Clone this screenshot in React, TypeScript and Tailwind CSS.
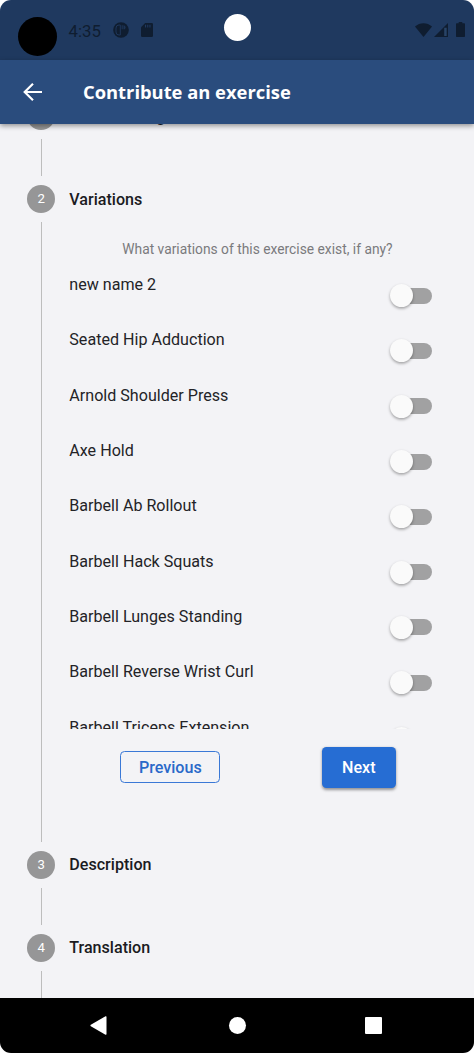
import React from 'react';

const exercises = [
  'new name 2',
  'Seated Hip Adduction',
  'Arnold Shoulder Press',
  'Axe Hold',
  'Barbell Ab Rollout',
  'Barbell Hack Squats',
  'Barbell Lunges Standing',
  'Barbell Reverse Wrist Curl',
  'Barbell Triceps Extension',
];

const StatusBar = () => (
  <div className="relative flex h-[59.5px] shrink-0 items-center bg-[#1f395f] pl-[17.5px] pr-[9px] text-[#0f1d30]">
    <div className="mt-[13px] h-[39px] w-[39px] rounded-full bg-black" />
    <span className="ml-[12px] mt-[2px] w-[34px] whitespace-nowrap text-[16.8px] leading-5">4:35</span>
    <svg className="ml-[10.5px] h-4 w-4" viewBox="0 0 16 16">
      <circle cx="8" cy="8" r="7.8" fill="currentColor" />
      <path d="M7.3 3v10H6a3 3 0 0 1-3-3V6a3 3 0 0 1 3-3z" fill="none" stroke="#1f395f" strokeWidth="0.9" />
      <path d="M8.6 3.2h1.2v4H8.600zM10.500 3.300a2.200 2.200 0 0 1 1.300 3.900h-1.300z" fill="#1f395f" opacity="0.8" />
    </svg>
    <svg className="ml-[11.500px] h-[14px] w-[12px]" viewBox="0 0 12 14">
      <path d="M4.200 0h6.600Q12 0 12 1.200v11.600q0 1.200-1.200 1.200H1.200Q0 14 0 12.800V4.200z" fill="currentColor" />
      <path d="M4 1.800h1.100v2.600H4zM6.200 1.800h1.100v2.600H6.200zM8.400 1.800h1.100v2.600H8.400z" fill="#1f395f" />
    </svg>
    <div className="absolute left-[223.5px] top-[13.5px] h-[27.5px] w-[27.5px] rounded-full bg-white" />
    <div className="ml-auto flex items-center">
      <svg className="h-[14px] w-[17px]" viewBox="0 0 18 14" preserveAspectRatio="none">
        <path d="M0 3.5C5 -1 13 -1 18 3.5L9 14z" fill="currentColor" />
      </svg>
      <svg className="ml-[2px] h-[14px] w-[14px]" viewBox="0 0 14 14">
        <path d="M14 0v14H0z" fill="currentColor" />
        <path d="M10.2 4.800h2.500v8.200h-2.500z" fill="#284467" />
      </svg>
      <svg className="ml-[8px] h-[15px] w-[9px]" viewBox="0 0 9 15">
        <path d="M2.7 0h3.6v1.3H8c.6 0 1 .4 1 1V14c0 .6-.4 1-1 1H1c-.6 0-1-.4-1-1V2.300c0-.6.4-1 1-1h1.700z" fill="currentColor" />
      </svg>
    </div>
  </div>
);

const AppBar = () => (
  <div className="relative z-10 flex h-[64.5px] shrink-0 items-center bg-[#2a4c7d] pl-[23px] shadow-[0_2px_5px_rgba(0,0,0,0.4)]">
    <svg className="h-[18px] w-[19px] text-white" viewBox="0 0 19 18" fill="none" stroke="currentColor" strokeWidth="2.2">
      <path d="M19 9H2M10 .8L1.700 9l8.300 8.200" />
    </svg>
    <h1 className="ml-[41px] font-['Open_Sans',sans-serif] text-[18.35px] font-bold leading-6 text-white">
      Contribute an exercise
    </h1>
  </div>
);

const Toggle = () => (
  <div className="relative mr-[42px] h-[16px] w-[38px] rounded-full bg-[#a1a1a2]">
    <div className="absolute -left-[4px] -top-[3.5px] h-[23px] w-[23px] rounded-full bg-[#fafafa] shadow-[0_1.5px_3px_rgba(0,0,0,0.35)]" />
  </div>
);

const Step = ({
  number,
  title,
  children,
}: {
  number: number;
  title: string;
  children?: React.ReactNode;
}) => (
  <div className="flex">
    <div className="flex w-[28px] shrink-0 flex-col items-center">
      <div className="flex h-[28px] w-[28px] items-center justify-center rounded-full bg-[#969697] text-[13.2px] text-white">
        {number}
      </div>
      <div className="my-[9px] min-h-[37px] w-px flex-1 bg-[#bdbdbd]" />
    </div>
    <div className="flex-1 pl-[14px]">
      <h2 className="flex h-[28px] items-center pt-[2px] text-[16.1px] font-medium text-[#1b1b1f]">{title}</h2>
      {children}
    </div>
  </div>
);

const Variations = () => (
  <div className="h-[637.5px] pt-[26.500px]">
    <p className="pl-[53px] text-[13.8px] leading-[18px] text-[#7a7a7d]">
      What variations of this exercise exist, if any?
    </p>
    <div className="mt-[10.500px] h-[460.500px] overflow-hidden">
      {exercises.map((name) => (
        <div key={name} className="flex h-[55.300px] items-center justify-between">
          <span className="mb-[21px] text-[16.1px] leading-5 text-[#232327]">{name}</span>
          <Toggle />
        </div>
      ))}
    </div>
    <div className="mt-[18px] flex items-center pl-[51px]">
      <button className="h-[32px] w-[100px] rounded-[4.500px] border border-[#3a78d6] pt-[2px] text-[16.1px] font-medium text-[#2a69c9]">
        Previous
      </button>
      <button className="ml-[101.500px] h-[41.500px] w-[74px] rounded-[4.500px] bg-[#266dd3] pt-[2px] text-[16.1px] font-medium text-white shadow-[0_1.5px_3px_rgba(0,0,0,0.4)]">
        Next
      </button>
    </div>
  </div>
);

const NavBar = () => (
  <div className="flex h-[55.500px] shrink-0 items-center bg-black pl-[90px] text-white">
    <svg className="h-[19px] w-[17px]" viewBox="0 0 17 19">
      <path d="M15.500.3Q16.500-.1 16.500 1v17q0 1.100-1 .7L.8 10.200q-.8-.7 0-1.400z" fill="currentColor" />
    </svg>
    <div className="ml-[121.500px] h-[17px] w-[17px] rounded-full bg-white" />
    <div className="ml-[119px] h-[17.500px] w-[17.500px] rounded-[1px] bg-white" />
  </div>
);

const App = () => {
  return (
    <div className="h-[1053px] w-[474px] bg-white">
      <div className="flex h-full flex-col overflow-hidden rounded-[11px] bg-[#f3f3f6] font-[Roboto,sans-serif]">
        <StatusBar />
        <AppBar />
        <div className="min-h-0 flex-1 overflow-hidden pl-[27.300px]">
          <div className="-mt-[22px]">
            <Step number={1} title="Basics in English" />
            <Step number={2} title="Variations">
              <Variations />
            </Step>
            <Step number={3} title="Description" />
            <Step number={4} title="Translation" />
          </div>
        </div>
        <NavBar />
      </div>
    </div>
  );
};

export default App;
